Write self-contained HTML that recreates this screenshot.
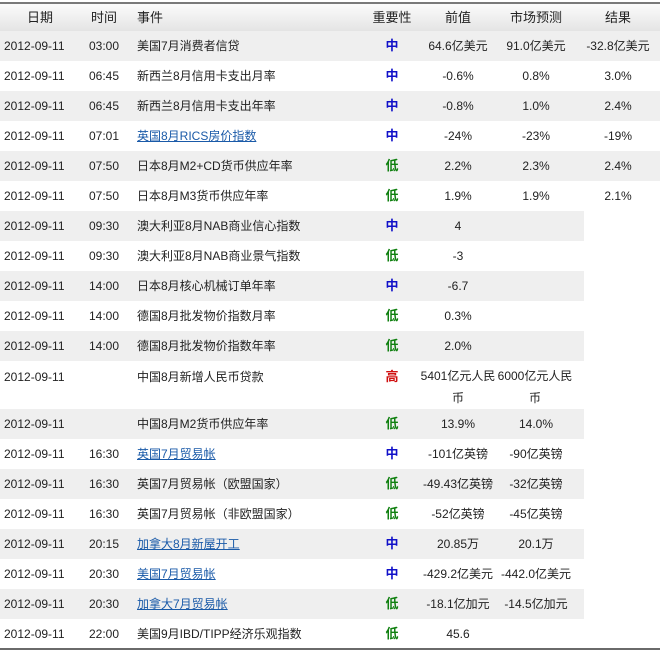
<!DOCTYPE html>
<html><head><meta charset="utf-8"><style>
body{margin:0;background:#fff;width:660px;height:654px;overflow:hidden;font-family:"Liberation Sans","Noto Sans CJK SC","WenQuanYi Zen Hei",sans-serif;font-size:12px;color:#222}
table{position:absolute;left:0;top:2px;border-collapse:collapse;table-layout:fixed;width:660px;border-top:2px solid #7a7a7a;border-bottom:2px solid #6a6a6a}
td,th{padding:0;height:30px;white-space:normal;line-height:24px;font-weight:normal;box-sizing:border-box}
th{height:28px;background:linear-gradient(#fbfbfb,#e4e4e4);font-size:13px;line-height:24px}
tr.g td.c{background:#efefef}
.d{padding-left:4px;text-align:left}
.t{text-align:center}
.e{padding-left:9px;text-align:left}
.i{text-align:center;font-weight:bold;font-size:13px}
.p{text-align:center}
.f{text-align:center;padding-right:8px}
.r{text-align:center;padding-right:8px}
.m{color:#1010c8}.l{color:#108010}.h{color:#d01010}
a{color:#1a5aa8;text-decoration:underline}
.tt{vertical-align:top;padding-top:4px}
</style></head><body>
<table>
<colgroup><col style="width:80px"><col style="width:48px"><col style="width:236px"><col style="width:56px"><col style="width:76px"><col style="width:88px"><col style="width:76px"></colgroup>
<tr style="height:28px"><th>日期</th><th>时间</th><th style="text-align:left;padding-left:9px">事件</th><th>重要性</th><th>前值</th><th style="padding-right:8px">市场预测</th><th style="padding-right:8px">结果</th></tr>
<tr class="g"><td class="c d">2012-09-11</td><td class="c t">03:00</td><td class="c e">美国7月消费者信贷</td><td class="c i m">中</td><td class="c p">64.6亿美元</td><td class="c f">91.0亿美元</td><td class="c r">-32.8亿美元</td></tr>
<tr><td class="c d">2012-09-11</td><td class="c t">06:45</td><td class="c e">新西兰8月信用卡支出月率</td><td class="c i m">中</td><td class="c p">-0.6%</td><td class="c f">0.8%</td><td class="c r">3.0%</td></tr>
<tr class="g"><td class="c d">2012-09-11</td><td class="c t">06:45</td><td class="c e">新西兰8月信用卡支出年率</td><td class="c i m">中</td><td class="c p">-0.8%</td><td class="c f">1.0%</td><td class="c r">2.4%</td></tr>
<tr><td class="c d">2012-09-11</td><td class="c t">07:01</td><td class="c e"><a>英国8月RICS房价指数</a></td><td class="c i m">中</td><td class="c p">-24%</td><td class="c f">-23%</td><td class="c r">-19%</td></tr>
<tr class="g"><td class="c d">2012-09-11</td><td class="c t">07:50</td><td class="c e">日本8月M2+CD货币供应年率</td><td class="c i l">低</td><td class="c p">2.2%</td><td class="c f">2.3%</td><td class="c r">2.4%</td></tr>
<tr><td class="c d">2012-09-11</td><td class="c t">07:50</td><td class="c e">日本8月M3货币供应年率</td><td class="c i l">低</td><td class="c p">1.9%</td><td class="c f">1.9%</td><td class="c r">2.1%</td></tr>
<tr class="g"><td class="c d">2012-09-11</td><td class="c t">09:30</td><td class="c e">澳大利亚8月NAB商业信心指数</td><td class="c i m">中</td><td class="c p">4</td><td class="c f"></td><td></td></tr>
<tr><td class="c d">2012-09-11</td><td class="c t">09:30</td><td class="c e">澳大利亚8月NAB商业景气指数</td><td class="c i l">低</td><td class="c p">-3</td><td class="c f"></td><td></td></tr>
<tr class="g"><td class="c d">2012-09-11</td><td class="c t">14:00</td><td class="c e">日本8月核心机械订单年率</td><td class="c i m">中</td><td class="c p">-6.7</td><td class="c f"></td><td></td></tr>
<tr><td class="c d">2012-09-11</td><td class="c t">14:00</td><td class="c e">德国8月批发物价指数月率</td><td class="c i l">低</td><td class="c p">0.3%</td><td class="c f"></td><td></td></tr>
<tr class="g"><td class="c d">2012-09-11</td><td class="c t">14:00</td><td class="c e">德国8月批发物价指数年率</td><td class="c i l">低</td><td class="c p">2.0%</td><td class="c f"></td><td></td></tr>
<tr style="height:48px"><td class="c d tt" style="height:48px">2012-09-11</td><td class="c t"></td><td class="c e tt">中国8月新增人民币贷款</td><td class="c i h tt">高</td><td class="c p tt" style="line-height:22px">5401亿元人民币</td><td class="c f tt" style="line-height:22px;padding-right:10px">6000亿元人民币</td><td></td></tr>
<tr class="g"><td class="c d">2012-09-11</td><td class="c t"></td><td class="c e">中国8月M2货币供应年率</td><td class="c i l">低</td><td class="c p">13.9%</td><td class="c f">14.0%</td><td></td></tr>
<tr><td class="c d">2012-09-11</td><td class="c t">16:30</td><td class="c e"><a>英国7月贸易帐</a></td><td class="c i m">中</td><td class="c p">-101亿英镑</td><td class="c f">-90亿英镑</td><td></td></tr>
<tr class="g"><td class="c d">2012-09-11</td><td class="c t">16:30</td><td class="c e">英国7月贸易帐（欧盟国家）</td><td class="c i l">低</td><td class="c p">-49.43亿英镑</td><td class="c f">-32亿英镑</td><td></td></tr>
<tr><td class="c d">2012-09-11</td><td class="c t">16:30</td><td class="c e">英国7月贸易帐（非欧盟国家）</td><td class="c i l">低</td><td class="c p">-52亿英镑</td><td class="c f">-45亿英镑</td><td></td></tr>
<tr class="g"><td class="c d">2012-09-11</td><td class="c t">20:15</td><td class="c e"><a>加拿大8月新屋开工</a></td><td class="c i m">中</td><td class="c p">20.85万</td><td class="c f">20.1万</td><td></td></tr>
<tr><td class="c d">2012-09-11</td><td class="c t">20:30</td><td class="c e"><a>美国7月贸易帐</a></td><td class="c i m">中</td><td class="c p">-429.2亿美元</td><td class="c f">-442.0亿美元</td><td></td></tr>
<tr class="g"><td class="c d">2012-09-11</td><td class="c t">20:30</td><td class="c e"><a>加拿大7月贸易帐</a></td><td class="c i l">低</td><td class="c p">-18.1亿加元</td><td class="c f">-14.5亿加元</td><td></td></tr>
<tr><td class="c d">2012-09-11</td><td class="c t">22:00</td><td class="c e">美国9月IBD/TIPP经济乐观指数</td><td class="c i l">低</td><td class="c p">45.6</td><td class="c f"></td><td></td></tr>
</table>
</body></html>
